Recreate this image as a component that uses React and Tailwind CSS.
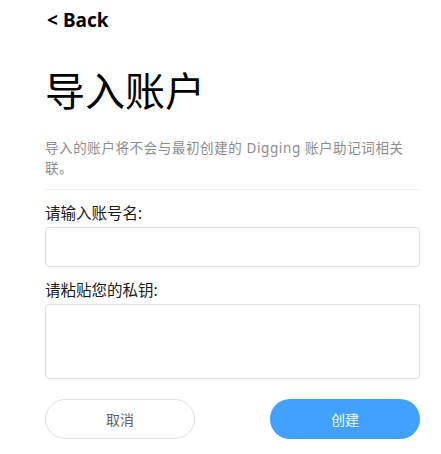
export default function App() {
  return (
    <div className="min-h-[454px] bg-white pl-[45px] font-['Noto_Sans','Noto_Sans_CJK_SC',sans-serif] text-[#1a1a1a]">
      <div className="w-[375px]">
        {/* Back */}
        <div className="flex h-[40px] items-center gap-[5px] pl-[2px] text-[19px] font-bold text-black">
          <span>&lt;</span>
          <span>Back</span>
        </div>

        <h1 className="mt-[26px] text-[40px] font-normal leading-[50px] text-black">导入账户</h1>

        <p className="mt-[22px] text-[13.5px] leading-[20px] tracking-[0.6px] text-[#8c8c8c]">
          导入的账户将不会与最初创建的 Digging 账户助记词相关联。
        </p>

        <div className="mt-[11px] border-t border-[#ebeef5]" />

        <label className="mt-[12px] block text-[15.5px] leading-[22px]">请输入账号名:</label>
        <input className="mt-[3px] block h-[40px] w-full rounded-[4px] border border-[#dcdfe6] px-3 text-[14px] outline-none" />

        <label className="mt-[12px] block text-[15.5px] leading-[22px]">请粘贴您的私钥:</label>
        <textarea className="mt-[3px] block h-[75px] w-full resize-none rounded-[4px] border border-[#dcdfe6] px-3 py-2 text-[14px] outline-none" />

        <div className="mt-[20px] flex justify-between">
          <button className="h-[40px] w-[150px] rounded-full border border-[#dcdfe6] bg-white text-[14px] text-[#606266]">
            取消
          </button>
          <button className="h-[40px] w-[150px] rounded-full bg-[#42a0ff] text-[14px] text-white">
            创建
          </button>
        </div>
      </div>
    </div>
  );
}
